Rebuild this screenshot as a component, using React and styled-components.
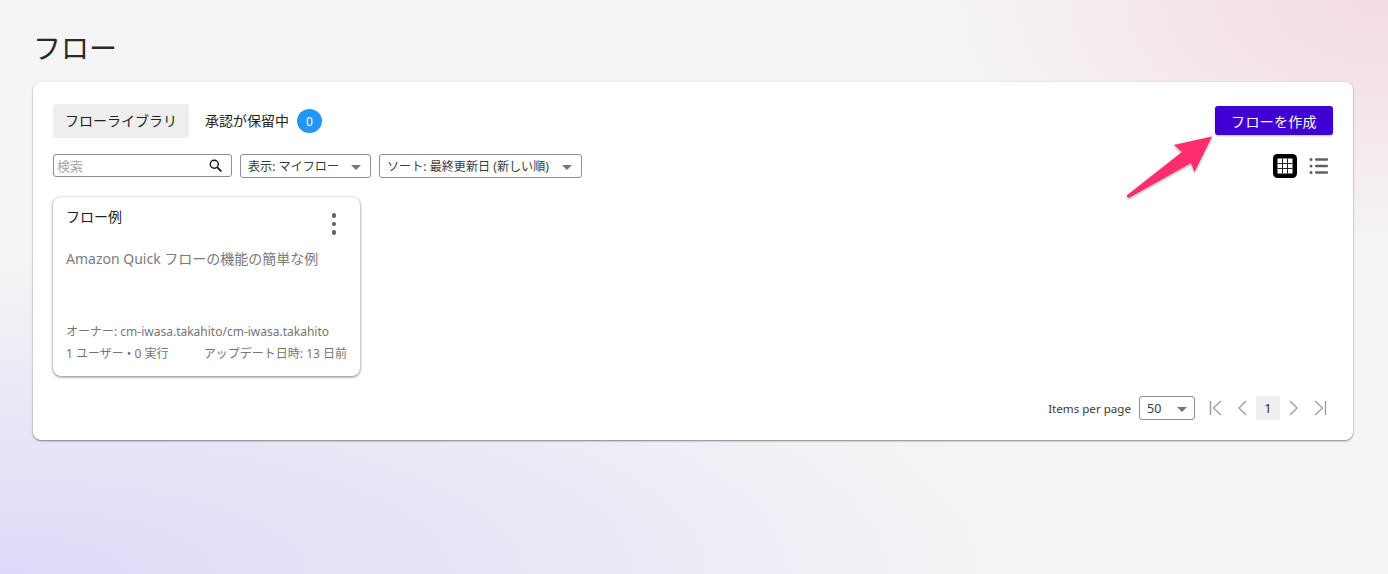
import React from "react";
import styled, { createGlobalStyle } from "styled-components";

const FONT = `"Noto Sans", "Noto Sans CJK JP", sans-serif`;

const Global = createGlobalStyle`
  html, body { margin: 0; padding: 0; height: 100%; }
  body { font-family: ${FONT}; color: #232323; overflow: hidden; }
  * { box-sizing: border-box; }
`;

const Page = styled.div`
  position: relative;
  width: 1388px;
  height: 574px;
  padding: 30px 35px 0 33px;
  background:
    radial-gradient(ellipse 470px 260px at 100% 0%, #f4dbe1 0%, rgba(244, 219, 225, 0) 100%),
    radial-gradient(ellipse 1050px 320px at 0% 100%, #dfd8f8 0%, rgba(223, 216, 248, 0) 100%),
    #f5f5f5;
`;

const Title = styled.h1`
  margin: 0 0 16px 0;
  height: 36px;
  font-size: 28px;
  line-height: 36px;
  font-weight: 400;
  color: #2a2a2a;
`;

const Panel = styled.section`
  height: 358px;
  background: #fff;
  border-radius: 8px;
  box-shadow: 0 1px 2px rgba(0, 0, 0, 0.45), 0 0 2px rgba(0, 0, 0, 0.08);
  padding: 22px 20px 0;
`;

const TopRow = styled.div`
  display: flex;
  align-items: flex-start;
  justify-content: space-between;
  height: 34px;
`;

const Tabs = styled.div`
  display: flex;
  align-items: center;
`;

const Tab = styled.div`
  height: 34px;
  padding: 0 12px;
  display: flex;
  align-items: center;
  gap: 8px;
  border-radius: 3px;
  font-size: 14px;
  background: ${(p) => (p.$active ? "#eeeeee" : "transparent")};
  margin-right: ${(p) => (p.$active ? "4px" : "0")};
`;

const TabLabel = styled.span`
  margin-bottom: 2px;
`;

const Badge = styled.span`
  width: 25px;
  height: 24px;
  border-radius: 50%;
  background: #2196f3;
  color: #fff;
  font-size: 12px;
  display: flex;
  align-items: center;
  justify-content: center;
`;

const Primary = styled.button`
  width: 118px;
  height: 29px;
  margin-top: 2px;
  border: none;
  border-radius: 3px;
  background: #4000d4;
  color: #fff;
  font-family: ${FONT};
  font-size: 14px;
  letter-spacing: 0.3px;
  box-shadow: 0 1px 2px rgba(0, 0, 0, 0.25);
  padding: 0;
`;

const FilterRow = styled.div`
  display: flex;
  align-items: center;
  justify-content: space-between;
  margin-top: 16px;
  height: 24px;
`;

const Filters = styled.div`
  display: flex;
  gap: 8px;
`;

const SearchBox = styled.div`
  width: 179px;
  height: 23px;
  border: 1px solid #8f8f8f;
  border-radius: 3px;
  display: flex;
  align-items: center;
  justify-content: space-between;
  padding: 0 9px 0 3px;
  font-size: 13px;
  color: #a5a5a5;
`;

const Select = styled.div`
  height: 24px;
  width: ${(p) => p.$w}px;
  border: 1px solid #8f8f8f;
  border-radius: 3px;
  display: flex;
  align-items: center;
  justify-content: space-between;
  padding: 0 9px 0 7px;
  font-size: 12.1px;
  color: #3a3a3a;
  white-space: nowrap;
`;

const Caret = styled.span`
  width: 0;
  height: 0;
  border-left: 5.5px solid transparent;
  border-right: 5.5px solid transparent;
  border-top: 5px solid #777;
  margin-top: 2px;
`;

const Views = styled.div`
  display: flex;
  align-items: center;
  gap: 12px;
  margin-right: 4px;
`;

const Card = styled.article`
  width: 307px;
  height: 179px;
  margin-top: 19px;
  border-radius: 8px;
  background: #fff;
  box-shadow: 0 1px 3px rgba(0, 0, 0, 0.5), 0 0 2px rgba(0, 0, 0, 0.1);
  padding: 10px 13px 0;
  display: flex;
  flex-direction: column;
`;

const CardHead = styled.div`
  display: flex;
  justify-content: space-between;
  align-items: flex-start;
  height: 42px;
`;

const CardTitle = styled.div`
  font-size: 14px;
  line-height: 20px;
  color: #232323;
`;

const Kebab = styled.div`
  display: flex;
  flex-direction: column;
  gap: 4px;
  margin: 6px 11px 0 0;
`;

const Dot = styled.span`
  width: 4.5px;
  height: 4.5px;
  border-radius: 50%;
  background: #616161;
`;

const Description = styled.div`
  font-size: 14px;
  line-height: 20px;
  color: #7b7b7b;
  height: 75px;
  white-space: nowrap;
`;

const Owner = styled.div`
  font-size: 12px;
  line-height: 16px;
  color: #757575;
  white-space: nowrap;
`;

const Meta = styled.div`
  display: flex;
  justify-content: space-between;
  margin-top: 6px;
  font-size: 12px;
  line-height: 16px;
  color: #757575;
  white-space: nowrap;
`;

const Pager = styled.div`
  display: flex;
  justify-content: flex-end;
  align-items: center;
  margin: 20px 3px 0 0;
  height: 24px;
  font-size: 11.6px;
  color: #3a3a3a;
`;

const PageSelect = styled(Select)`
  margin: 0 13px 0 8px;
  padding: 0 7px 0 7px;
  font-size: 12.5px;
`;

const PagerIcon = styled.svg`
  width: 16px;
  height: 18px;
  margin: ${(p) => p.$m};
  fill: none;
  stroke: #9a9a9a;
  stroke-width: 1.3;
`;

const Current = styled.span`
  width: 24px;
  height: 24px;
  margin: 0 6px;
  border-radius: 3px;
  background: #eeeeee;
  display: flex;
  align-items: center;
  justify-content: center;
  font-size: 12px;
  color: #232323;
`;

const Arrow = styled.svg`
  position: absolute;
  left: 1120px;
  top: 130px;
  width: 100px;
  height: 75px;
  overflow: visible;
  filter: drop-shadow(0 1px 1.5px rgba(0, 0, 0, 0.4));
`;

export default function App() {
  return (
    <Page>
      <Global />
      <Title>フロー</Title>
      <Panel>
        <TopRow>
          <Tabs>
            <Tab $active>
              <TabLabel>フローライブラリ</TabLabel>
            </Tab>
            <Tab>
              <TabLabel>承認が保留中</TabLabel>
              <Badge>0</Badge>
            </Tab>
          </Tabs>
          <Primary>フローを作成</Primary>
        </TopRow>
        <FilterRow>
          <Filters>
            <SearchBox>
              検索
              <svg width="13" height="13" viewBox="0 0 13 13" fill="none" stroke="#111" strokeWidth="1.4">
                <circle cx="5.3" cy="5.3" r="4" />
                <path d="M8.3 8.3 12.3 12.3" strokeWidth="1.7" />
              </svg>
            </SearchBox>
            <Select $w={131}>
              表示: マイフロー<Caret />
            </Select>
            <Select $w={203}>
              ソート: 最終更新日 (新しい順)<Caret />
            </Select>
          </Filters>
          <Views>
            <svg width="24" height="24" viewBox="0 0 24 24">
              <rect width="24" height="24" rx="4.5" fill="#000" />
              <rect x="4.5" y="4.5" width="15" height="15" fill="#fff" />
              <path d="M9.5 4.5V19.5M14.5 4.5V19.5M4.5 9.5H19.5M4.5 14.5H19.5" stroke="#222" strokeWidth="1" />
            </svg>
            <svg width="20" height="18" viewBox="0 0 20 18" fill="#616161">
              <circle cx="2" cy="2.5" r="1.5" />
              <circle cx="2" cy="9" r="1.5" />
              <circle cx="2" cy="15.5" r="1.5" />
              <rect x="6" y="1.2" width="13" height="2.6" rx="1" />
              <rect x="6" y="7.7" width="13" height="2.6" rx="1" />
              <rect x="6" y="14.2" width="13" height="2.6" rx="1" />
            </svg>
          </Views>
        </FilterRow>
        <Card>
          <CardHead>
            <CardTitle>フロー例</CardTitle>
            <Kebab>
              <Dot />
              <Dot />
              <Dot />
            </Kebab>
          </CardHead>
          <Description>Amazon Quick フローの機能の簡単な例</Description>
          <Owner>オーナー: cm-iwasa.takahito/cm-iwasa.takahito</Owner>
          <Meta>
            <span>1 ユーザー • 0 実行</span>
            <span>アップデート日時: 13 日前</span>
          </Meta>
        </Card>
        <Pager>
          Items per page
          <PageSelect $w={56}>
            50
            <Caret />
          </PageSelect>
          <PagerIcon viewBox="0 0 16 18" $m="0 2px 0 0">
            <path d="M2.5 2V16M13 2 5.5 9 13 16" />
          </PagerIcon>
          <PagerIcon viewBox="0 0 16 18" $m="0 0 0 8px">
            <path d="M12 2 5 9 12 16" />
          </PagerIcon>
          <Current>1</Current>
          <PagerIcon viewBox="0 0 16 18" $m="0 8px 0 0">
            <path d="M4 2 11 9 4 16" />
          </PagerIcon>
          <PagerIcon viewBox="0 0 16 18" $m="0 2px 0 2px">
            <path d="M13.5 2V16M3 2 10.5 9 3 16" />
          </PagerIcon>
        </Pager>
      </Panel>
      <Arrow viewBox="0 0 100 75">
        <path d="M7 66.5 Q6.5 65.5 8 64.5 L62 22 L54 15 L92 6.5 L74.5 42 L71 33 L9.5 67.5 Q7.8 68 7 66.5Z" fill="#ff2d6e" />
      </Arrow>
    </Page>
  );
}
